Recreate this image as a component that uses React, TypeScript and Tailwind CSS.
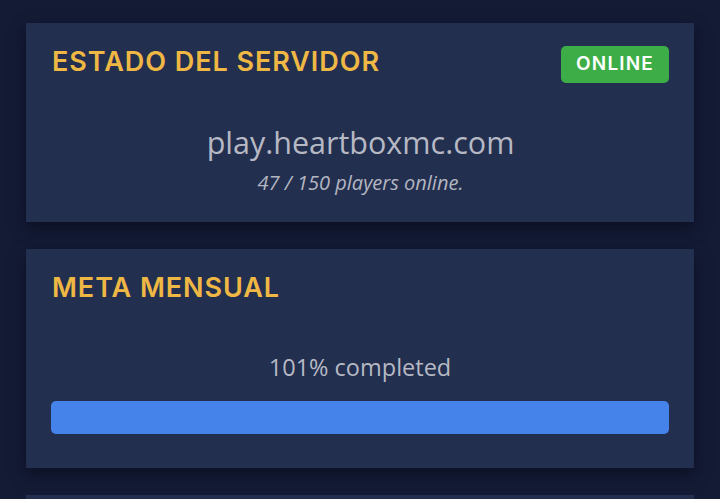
export default function App() {
  return (
    <div className="min-h-[499px] bg-[#141b35] px-[26px] pt-[23px] font-['Open_Sans',sans-serif]">
      <div className="flex flex-col gap-[27px]">
        {/* server status */}
        <section className="h-[199px] bg-[#232f4f] pl-[26px] pr-[25px] pt-[23px] shadow-[0_6px_14px_rgba(5,8,20,0.55)]">
          <div className="flex items-start justify-between">
            <h2 className="-mt-[1px] font-['Inter',sans-serif] text-[27px] font-semibold leading-[34px] tracking-[0.035em] text-[#efb845]">
              ESTADO DEL SERVIDOR
            </h2>
            <span className="flex h-[37px] w-[108px] items-center justify-center rounded-[5px] bg-[#3dae47] font-['Inter',sans-serif] text-[19px] font-semibold tracking-[0.06em] text-white">
              ONLINE
            </span>
          </div>
          <div className="mt-[39px] text-center">
            <p className="text-[30.5px] leading-[40px] text-[#b6b9c4]">play.heartboxmc.com</p>
            <p className="mt-[8px] text-[20px] italic leading-[26px] text-[#b3b6c1]">
              47 / 150 players online.
            </p>
          </div>
        </section>

        {/* monthly goal */}
        <section className="h-[219px] bg-[#232f4f] px-[25px] pt-[23px] shadow-[0_6px_14px_rgba(5,8,20,0.55)]">
          <h2 className="-mt-[1px] pl-[1px] font-['Inter',sans-serif] text-[27px] font-semibold leading-[34px] tracking-[0.035em] text-[#efb845]">
            META MENSUAL
          </h2>
          <p className="mt-[47px] text-center text-[23.5px] leading-[30px] text-[#b6b9c4]">101% completed</p>
          <div className="mt-[19px] h-[33px] overflow-hidden rounded-[5px] bg-[#1b2440]">
            <div className="h-full bg-[#4582ea]" style={{ width: `${Math.min(101, 100)}%` }} />
          </div>
        </section>

        <section className="h-[200px] bg-[#232f4f]" />
      </div>
    </div>
  );
}
